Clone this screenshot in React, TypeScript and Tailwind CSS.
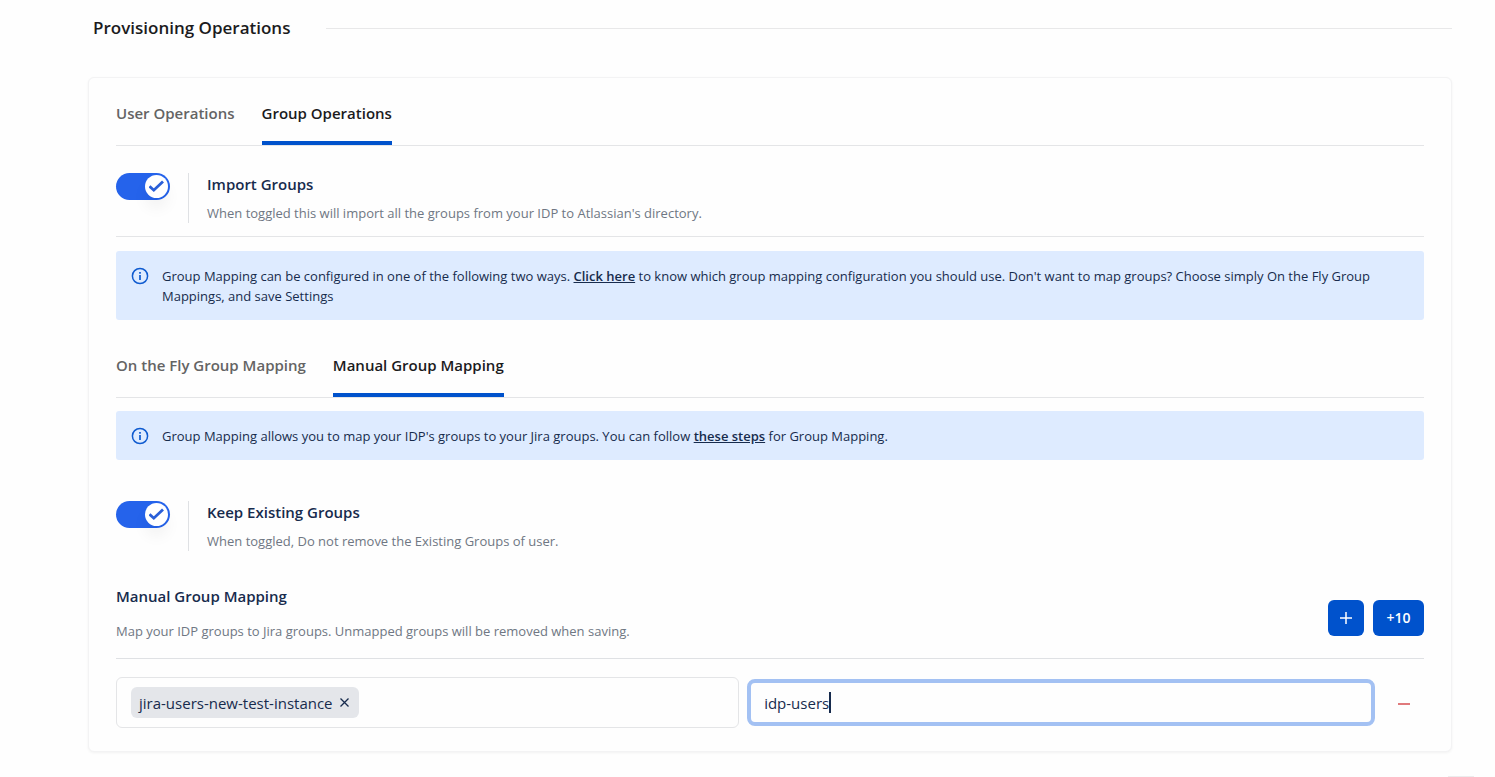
import { useState } from "react";
import type { ReactNode } from "react";

function Tabs({ items, initial }: { items: string[]; initial: number }) {
  const [active, setActive] = useState(initial);
  return (
    <div role="tablist" className="flex gap-[27px] border-b border-[#e4e5e7]">
      {items.map((item, i) => (
        <button
          key={item}
          type="button"
          role="tab"
          aria-selected={i === active}
          onClick={() => setActive(i)}
          className={
            i === active
              ? "border-b-4 border-[#0052cc] pb-4 text-[15px] leading-6 font-semibold text-[#1b1b1d]"
              : "border-b-4 border-transparent pb-4 text-[15px] leading-6 font-semibold text-[#646464]"
          }
        >
          {item}
        </button>
      ))}
    </div>
  );
}

function ToggleRow({ id, title, text }: { id: string; title: string; text: string }) {
  const [on, setOn] = useState(true);
  return (
    <div className="flex">
      <div className="relative h-[27px] w-[54px] shrink-0">
        <input
          id={id}
          type="checkbox"
          role="switch"
          checked={on}
          onChange={(e) => setOn(e.target.checked)}
          className="peer block h-full w-full cursor-pointer appearance-none rounded-full bg-gray-300 checked:bg-[#2563eb]"
        />
        <span className="pointer-events-none absolute top-[2px] left-[2px] flex size-[23px] items-center justify-center rounded-full bg-white text-[#2a5fd8] shadow-[0_10px_15px_rgba(0,0,0,0.05)] peer-checked:left-[29px]">
          <svg width="15" height="13" viewBox="0 0 15 13" fill="none" stroke="currentColor" strokeWidth="2.8" aria-hidden="true">
            <path d="M.5 6.2 4.8 10.2 14 1.4" />
          </svg>
        </span>
      </div>
      <div className="ml-[18px] border-l border-[#dfe1e4] pl-[18px]">
        <label htmlFor={id} className="block text-[15px] leading-[22px] font-semibold text-[#172b4d]">
          {title}
        </label>
        <p className="pt-2 text-[13px] leading-5 text-[#6f7783]">{text}</p>
      </div>
    </div>
  );
}

function Info({ children }: { children: ReactNode }) {
  return (
    <div className="flex rounded-[3px] bg-[#deebff] px-[15px] pt-[15px] pb-[14px]">
      <svg className="mt-px mr-[13px] shrink-0" width="18" height="18" viewBox="0 0 18 18" fill="none" stroke="#0f5bd0" aria-hidden="true">
        <circle cx="9" cy="9" r="7.6" strokeWidth="1.5" />
        <path d="M9 8v5M9 5v1.8" strokeWidth="1.7" />
      </svg>
      <p className="text-[13px] leading-5 text-[#172b4d]">{children}</p>
    </div>
  );
}

function App() {
  const [group, setGroup] = useState("idp-users");
  const [tags, setTags] = useState(["jira-users-new-test-instance"]);
  return (
    <main className="bg-[#fefefe] pt-4 pr-[43px] pl-[88px] font-['Open_Sans','Noto_Sans',sans-serif]">
      <header className="flex items-center gap-9 pl-[5px]">
        <h1 className="text-[17px] leading-6 font-semibold text-[#1b1b1d]">Provisioning Operations</h1>
        <div className="h-px flex-1 bg-[#e8e8e9]" />
      </header>

      <section className="mt-[37px] rounded-md border border-[#f3f3f4] bg-[#fefefe] px-[27px] pt-[23px] pb-[23px] shadow-[0_1px_3px_rgba(0,0,0,0.05)]">
        <Tabs items={["User Operations", "Group Operations"]} initial={1} />

        <div className="border-b border-[#e4e5e7] pt-[27px] pb-[13px]">
          <ToggleRow
            id="import-groups"
            title="Import Groups"
            text="When toggled this will import all the groups from your IDP to Atlassian's directory."
          />
        </div>

        <div className="pt-[14px] pb-[33px]">
          <Info>
            Group Mapping can be configured in one of the following two ways.{" "}
            <a href="#guide" className="font-semibold underline">Click here</a> to know which group mapping
            configuration you should use. Don't want to map groups? Choose simply On the Fly Group
            Mappings, and save Settings
          </Info>
        </div>

        <Tabs items={["On the Fly Group Mapping", "Manual Group Mapping"]} initial={1} />

        <div className="pt-[13px] pb-[41px]">
          <Info>
            Group Mapping allows you to map your IDP's groups to your Jira groups. You can follow{" "}
            <a href="#steps" className="font-semibold underline">these steps</a> for Group Mapping.
          </Info>
        </div>

        <ToggleRow
          id="keep-groups"
          title="Keep Existing Groups"
          text="When toggled, Do not remove the Existing Groups of user."
        />

        <div className="mt-[33px] flex items-center justify-between border-b border-[#dfe1e4] pb-[17px]">
          <div>
            <h2 className="text-[15px] leading-6 font-semibold text-[#172b4d]">Manual Group Mapping</h2>
            <p className="pt-[13px] text-[13px] leading-5 text-[#6f7783]">
              Map your IDP groups to Jira groups. Unmapped groups will be removed when saving.
            </p>
          </div>
          <div className="mt-[10px] flex gap-[9px] self-center">
            <button type="button" aria-label="Add row" className="flex size-9 items-center justify-center rounded-md bg-[#0052cc] text-white">
              <svg width="14" height="14" viewBox="0 0 14 14" stroke="currentColor" strokeWidth="1.5" aria-hidden="true">
                <path d="M7 1v12M1 7h12" />
              </svg>
            </button>
            <button type="button" className="h-9 w-[51px] rounded-md bg-[#0052cc] text-[14px] leading-5 font-semibold text-white">
              +10
            </button>
          </div>
        </div>

        <div className="mt-[18px] grid grid-cols-[98fr_100fr_auto] items-center">
          <div className="flex h-[51px] min-w-0 items-center rounded-md border border-[#e4e5e7] px-[14px]">
            {tags.map((tag) => (
              <span key={tag} className="flex h-[31px] items-center gap-[7px] rounded-md bg-[#e4e6ea] pr-[10px] pl-2 text-[15px] leading-6 text-[#172b4d]">
                {tag}
                <button type="button" aria-label={"Remove " + tag} onClick={() => setTags(tags.filter((t) => t !== tag))}>
                  <svg width="9" height="9" viewBox="0 0 9 9" stroke="currentColor" strokeWidth="1.3" aria-hidden="true">
                    <path d="M.5.5l8 8M8.5.5l-8 8" />
                  </svg>
                </button>
              </span>
            ))}
          </div>
          <div className="relative ml-2 min-w-0">
            <input
              type="text"
              aria-label="IDP group"
              value={group}
              onChange={(e) => setGroup(e.target.value)}
              className="block h-[47px] w-full rounded-lg border-4 border-[#a3c1f3] bg-[#fefefe] px-[13px] text-[15px] leading-6 text-[#172b4d] caret-transparent outline-none"
            />
            <div aria-hidden="true" className="pointer-events-none absolute inset-0 flex items-center pl-[17px] text-[15px] leading-6">
              <span className="invisible whitespace-pre">{group}</span>
              <span className="h-[21px] w-[2px] bg-[#172b4d]" />
            </div>
          </div>
          <button type="button" aria-label="Remove row" className="ml-[9px] flex h-9 w-10 items-center justify-center pt-[3px]">
            <svg width="12" height="2" viewBox="0 0 12 2" aria-hidden="true">
              <rect width="12" height="2" fill="#e07a7c" />
            </svg>
          </button>
        </div>
      </section>
      <div className="mt-6 -mr-[22px] flex justify-end">
        <div className="h-px w-[26px] bg-[#ececed]" />
      </div>
    </main>
  );
}

export default App;
